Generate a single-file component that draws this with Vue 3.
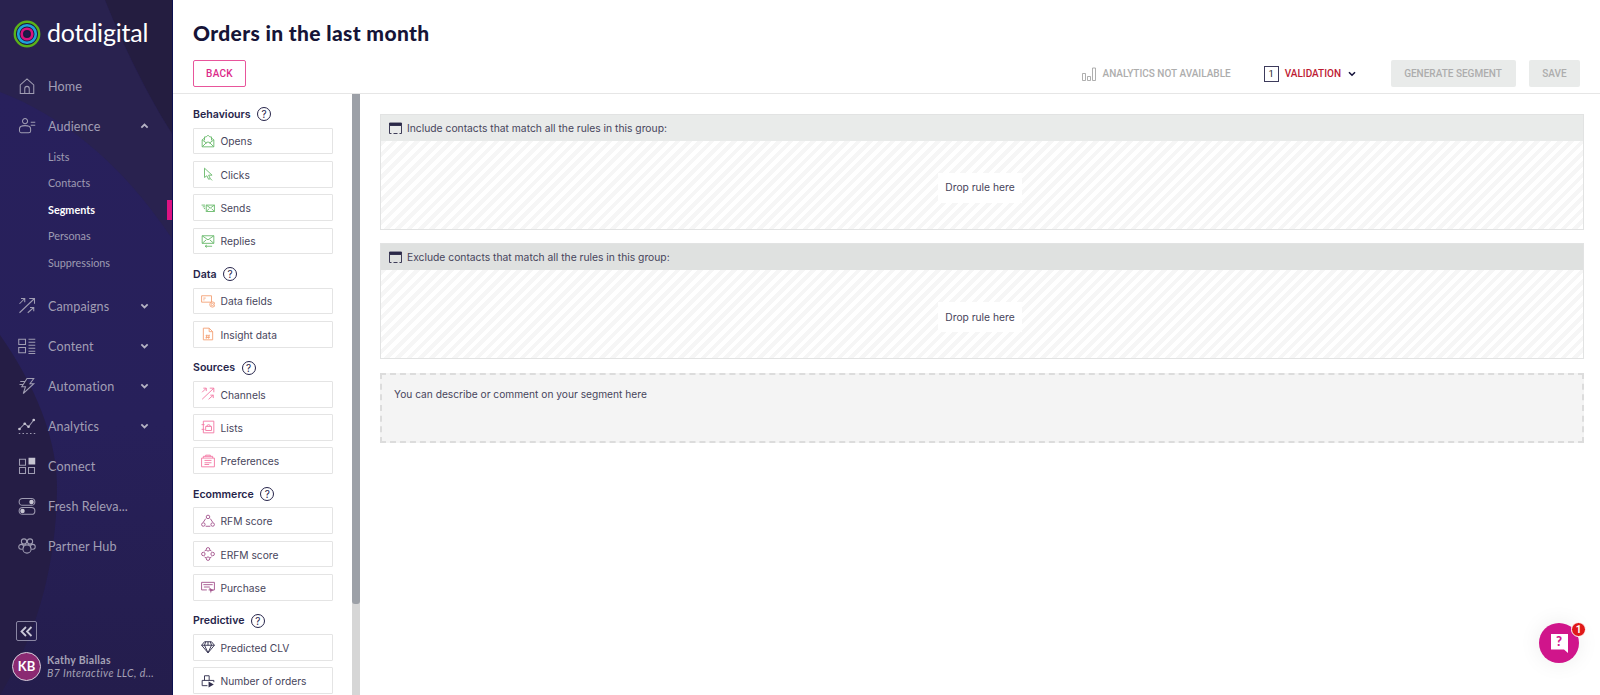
<script setup>
const nav = [
  { label: 'Home', icon: ['M3 22V10.5L12 2.5l9 8V22zM9 22v-6.5a3 3 0 0 1 6 0V22'] },
  { label: 'Audience', chev: 'up', icon: ['M6 5.5a3.4 3.4 0 1 1 6.8 0a3.4 3.4 0 1 1-6.8 0zM4 21a2.500 2.500 0 0 1-2-2.500v-3C2 13 4.500 11.500 9.400 11.500s7.400 1.500 7.400 4v3c0 1.500-1 2.500-2.500 2.500zM17 7h6M17 11h6'] },
]
const navB = [
  { label: 'Campaigns', chev: 'down', icon: ['M2 21L22 2M15 2h7v7M2 9l7-7M4 2h5v5M13 21l8-7M16 14h5v5'] },
  { label: 'Content', chev: 'down', icon: ['M1 3h9v7H1zM1 14h9v7H1zM14 3h9M14 7h9M14 11h9M14 15h9M14 19h9M14 22h9'] },
  { label: 'Automation', chev: 'down', icon: ['M12 2h9l-5 7h5L7 22l3-9H5zM3 6h6M2 10h5'] },
  { label: 'Analytics', chev: 'down', icon: ['M2 16l7-7 5 4 7-9M1 22h2M6 22h2M11 22h2M16 22h2M21 22h2'], dots: [[2, 16], [9, 9], [14, 13], [21, 4]] },
  { label: 'Connect', icon: ['M2 3h8v8H2zM2 14h8v8H2zM14 14h8v8h-8z'], fill: ['M14 1h9v9h-9z'] },
  { label: 'Fresh Releva...', icon: ['M6 2h12a4 4 0 0 1 0 9H6a4 4 0 0 1 0-9zM6 14h12a4 4 0 0 1 0 9H6a4 4 0 0 1 0-9z'], fill: ['M15 6.500a3 3 0 1 0 6 0a3 3 0 1 0-6 0zM3 18.500a3 3 0 1 0 6 0a3 3 0 1 0-6 0z'] },
  { label: 'Partner Hub', icon: ['M4.500 6a3.500 3.500 0 1 0 7 0a3.500 3.500 0 1 0-7 0zM12.500 6a3.500 3.500 0 1 0 7 0a3.500 3.500 0 1 0-7 0zM1 13a3.200 3.200 0 1 0 6.400 0a3.200 3.200 0 1 0-6.400 0zM16.600 13a3.200 3.200 0 1 0 6.400 0a3.200 3.200 0 1 0-6.400 0zM6.500 16a5.500 5.500 0 1 0 11 0a5.500 5.500 0 1 0-11 0z'] },
]
const subs = ['Lists', 'Contacts', 'Segments', 'Personas', 'Suppressions']

const groups = [
  { title: 'Behaviours', items: [
    { label: 'Opens', cls: 'green', d: 'M2 10l4-3M22 10l-4-3M6 11V5h3l3-3 3 3h3v6M2 10v12h20V10M2 22l8-8h4l8 8M2 10l8 6M22 10l-8 6' },
    { label: 'Clicks', cls: 'green', d: 'M6 2v16l4-3 3 6 3-1-3-6h6zM16 20l3 3' },
    { label: 'Sends', cls: 'green', d: 'M9 7h14v11H9zM9 7l7 5 7-5M9 18l5-5M23 18l-5-5M1 7h6M3 10h4M5 13h2' },
    { label: 'Replies', cls: 'green', d: 'M2 3h20v13H2zM2 3l10 7 10-7M2 16l7-6M22 16l-7-6M7 21h12M7 21l3-2M7 21l3 2' },
  ] },
  { title: 'Data', items: [
    { label: 'Data fields', cls: 'orange', d: 'M1 3h17v11H1zM4 7h4M4 10h2M15 18a4.500 4.500 0 1 0 9 0a4.500 4.500 0 1 0-9 0zM17.500 18a2 2 0 1 0 4 0a2 2 0 1 0-4 0' },
    { label: 'Insight data', cls: 'orange', d: 'M4 2h10l6 6v14H4zM14 2v6h6M10 13l-1 7M14 13l-1 7M8 15h7M8 18h7' },
  ] },
  { title: 'Sources', items: [
    { label: 'Channels', cls: 'pink', d: 'M2 21L22 2M15 2h7v7M2 9l7-7M4 2h5v5M13 21l8-7M16 14h5v5' },
    { label: 'Lists', cls: 'pink', d: 'M4 2h18v20H4zM1 8h5M1 16h5M8 11h10v7H8zM10 11a3 3 0 0 1 6 0' },
    { label: 'Preferences', cls: 'pink', d: 'M1 7h22v15H1zM4 7V4h16v3M8 4V2h8v2M6 11h12M6 15h12M6 18h8' },
  ] },
  { title: 'Ecommerce', items: [
    { label: 'RFM score', cls: 'purple', d: 'M9 5a3 3 0 1 0 6 0a3 3 0 1 0-6 0zM1 18a3 3 0 1 0 6 0a3 3 0 1 0-6 0zM17 18a3 3 0 1 0 6 0a3 3 0 1 0-6 0zM8 21h8M4 14l4-6M20 14l-4-6' },
    { label: 'ERFM score', cls: 'purple', d: 'M9 4a3 3 0 1 0 6 0a3 3 0 1 0-6 0zM9 20a3 3 0 1 0 6 0a3 3 0 1 0-6 0zM1 12a3 3 0 1 0 6 0a3 3 0 1 0-6 0zM17 12a3 3 0 1 0 6 0a3 3 0 1 0-6 0zM6 7l3-2M18 7l-3-2M6 17l3 2M18 17l-3 2' },
    { label: 'Purchase', cls: 'purple', d: 'M1 4h22v13H13M1 4v13h9M4 8h16M5 12h10', f: 'M14 13l8 5-4 1-1 4z' },
  ] },
  { title: 'Predictive', items: [
    { label: 'Predicted CLV', cls: 'dark', d: 'M6 3h12l5 6-11 13L1 9zM1 9h22M8 3L6 9l6 13 6-13-2-6M12 3v6' },
    { label: 'Number of orders', cls: 'dark', d: 'M2 11h20M2 11v9h9M22 11v3M6 11V3h8v8', f: 'M13 13l9 5-9 5z' },
  ] },
]

const boxes = [
  { text: 'Include contacts that match all the rules in this group:', cls: '' },
  { text: 'Exclude contacts that match all the rules in this group:', cls: 'darker' },
]
</script>

<template>
  <div class="app">
    <aside class="side">
      <svg class="side-bg" width="173" height="695" viewBox="0 0 173 695" aria-hidden="true">
        <defs>
          <linearGradient id="sideFill" x1="0" y1="92" x2="0" y2="695" gradientUnits="userSpaceOnUse">
            <stop offset="0" stop-color="#28205c" />
            <stop offset=".55" stop-color="#27205a" />
            <stop offset="1" stop-color="#241d4c" />
          </linearGradient>
        </defs>
        <path d="M0 0H173V695H0Z" fill="url(#sideFill)" />
        <path d="M0 0H105C125 50 150 100 173 135V240C120 160 60 115 0 92Z" fill="#29224f" />
        <path d="M105 0H173V135C150 100 125 50 105 0Z" fill="#241d40" />
        <path d="M0 335C35 385 58 440 57 490C56 560 40 630 0 695Z" fill="#251d45" />
      </svg>

      <div class="logo">
        <svg width="28" height="28" viewBox="0 0 28 28" aria-hidden="true">
          <circle cx="14" cy="14" r="12.200" fill="#1a1a40" stroke="#5bb318" stroke-width="2.400" />
          <circle cx="14" cy="14" r="8.800" fill="none" stroke="#1ea2d8" stroke-width="2.600" />
          <circle cx="14" cy="14" r="5.300" fill="none" stroke="#d8127e" stroke-width="2.600" />
          <circle cx="14" cy="14" r="2.400" fill="#1e1a4c" />
        </svg>
        <span class="logo-text">dotdigital</span>
      </div>

      <nav class="nav">
        <div v-for="n in nav" :key="n.label" class="nav-item">
          <svg class="nav-icon" viewBox="0 0 24 24" aria-hidden="true"><path v-for="d in n.icon" :key="d" :d="d" /></svg>
          <span class="nav-label">{{ n.label }}</span>
          <svg v-if="n.chev" class="chev" :class="{ up: n.chev === 'up' }" viewBox="0 0 10 6" aria-hidden="true"><path d="M1.500 1.200L5 4.600l3.500-3.400" /></svg>
        </div>
        <div class="subs">
          <div v-for="s in subs" :key="s" class="sub" :class="{ active: s === 'Segments' }">
            {{ s }}
            <span v-if="s === 'Segments'" class="marker"></span>
          </div>
        </div>
        <div v-for="n in navB" :key="n.label" class="nav-item">
          <svg class="nav-icon" viewBox="0 0 24 24" aria-hidden="true">
            <path v-for="d in n.icon" :key="d" :d="d" />
            <path v-for="d in n.fill || []" :key="d" :d="d" class="solid" />
            <circle v-for="p in n.dots || []" :key="p[0]" :cx="p[0]" :cy="p[1]" r="1.800" class="solid" />
          </svg>
          <span class="nav-label">{{ n.label }}</span>
          <svg v-if="n.chev" class="chev" viewBox="0 0 10 6" aria-hidden="true"><path d="M1.500 1.200L5 4.600l3.500-3.400" /></svg>
        </div>
      </nav>

      <div class="side-foot">
        <button class="collapse" aria-label="Collapse">
          <svg width="13" height="11" viewBox="0 0 13 11" aria-hidden="true"><path d="M6 1L1.500 5.500 6 10M11.500 1L7 5.500l4.500 4.500" /></svg>
        </button>
        <div class="user">
          <div class="avatar">KB</div>
          <div class="user-text">
            <div class="user-name">Kathy Biallas</div>
            <div class="user-org">B7 Interactive LLC, d...</div>
          </div>
        </div>
      </div>
    </aside>

    <main class="main">
      <header class="head">
        <h1 class="title">Orders in the last month</h1>
        <div class="bar">
          <button class="back">BACK</button>
          <div class="tools">
            <div class="analytics">
              <svg width="14" height="14" viewBox="0 0 14 14" aria-hidden="true"><path d="M.500 6.500h3v7h-3zM5.500 9.500h3v4h-3zM10.500 1h3v12.500h-3z" /></svg>
              <span>ANALYTICS NOT AVAILABLE</span>
            </div>
            <div class="validation">
              <span class="count">1</span>
              <span class="val-text">VALIDATION</span>
              <svg width="8" height="6" viewBox="0 0 8 6" aria-hidden="true"><path d="M1 1.200l3 3 3-3" /></svg>
            </div>
            <button class="disabled gen">GENERATE SEGMENT</button>
            <button class="disabled save">SAVE</button>
          </div>
        </div>
      </header>

      <div class="body">
        <div class="palette">
          <section v-for="g in groups" :key="g.title" class="group">
            <div class="g-title">{{ g.title }}<span class="help">?</span></div>
            <div v-for="it in g.items" :key="it.label" class="item">
              <svg class="item-icon" :class="it.cls" viewBox="0 0 24 24" aria-hidden="true">
                <path :d="it.d" />
                <path v-if="it.f" :d="it.f" class="solid" />
              </svg>
              <span class="item-text">{{ it.label }}</span>
            </div>
          </section>
        </div>
        <div class="scroll"><div class="thumb"></div></div>

        <div class="content">
          <div v-for="b in boxes" :key="b.text" class="box" :class="b.cls">
            <div class="box-head">
              <svg width="13" height="12" viewBox="0 0 13 12" aria-hidden="true">
                <path d="M.500 1h12v2.500H.500z" class="box-top" />
                <path d="M.500 3.500v8M12.500 3.500v8M.500 11.500h2M4.500 11.500h4M10.500 11.500h2" />
              </svg>
              <span>{{ b.text }}</span>
            </div>
            <div class="zone"><span class="drop">Drop rule here</span></div>
          </div>
          <div class="note">You can describe or comment on your segment here</div>
        </div>
      </div>
    </main>

    <div class="chat">
      <svg width="17" height="19" viewBox="0 0 17 19" aria-hidden="true"><path d="M0 0h17v19l-4-3.500H0z" fill="#fff" /></svg>
      <span class="chat-q">?</span>
      <span class="badge">1</span>
    </div>
  </div>
</template>

<style>
html, body { margin: 0; padding: 0; background: #fff; overflow: hidden; }
</style>

<style scoped>
.app {
  position: relative;
  display: flex;
  width: 1600px;
  height: 695px;
  overflow: hidden;
  font-family: Roboto, "Liberation Sans", sans-serif;
  color: #3d3b52;
}
.side {
  position: relative;
  flex: 0 0 173px;
  box-sizing: border-box;
  width: 173px;
  height: 695px;
  border-right: 1px solid #0e1150;
  display: flex;
  flex-direction: column;
  font-family: Lato, "Liberation Sans", sans-serif;
  overflow: hidden;
}
.side-bg { position: absolute; left: 0; top: 0; }
.logo, .nav, .side-foot { position: relative; }
.logo {
  display: flex;
  align-items: center;
  gap: 6px;
  height: 28px;
  padding: 20px 0 0 13px;
}
.logo-text { margin-top: -4px; color: #fff; font-size: 25px; line-height: 28px; letter-spacing: -.2px; }
.nav { margin-top: 18px; }
.nav-item {
  display: flex;
  align-items: center;
  height: 40px;
  padding-left: 18px;
  color: #a19eb4;
}
.nav-icon {
  flex: 0 0 18px;
  width: 18px;
  height: 18px;
  fill: none;
  stroke: #9f9cb2;
  stroke-width: 1.400;
}
.nav-icon .solid { fill: #c7c5d2; stroke: none; }
.nav-label { margin-left: 12px; font-size: 12.600px; letter-spacing: .1px; white-space: nowrap; }
.chev {
  position: absolute;
  left: 140px;
  width: 9px;
  height: 6px;
  fill: none;
  stroke: #b5b3c4;
  stroke-width: 2;
}
.chev.up { transform: rotate(180deg); }
.subs { margin-top: -2.500px; padding-bottom: 9.500px; }
.sub {
  position: relative;
  height: 26.670px;
  line-height: 26.670px;
  padding-left: 48px;
  font-size: 10.800px;
  color: #9e9bb2;
}
.sub.active { color: #fff; font-weight: 700; }
.marker {
  position: absolute;
  right: 0;
  top: 3px;
  width: 5px;
  height: 20px;
  background: #dd1282;
}
.side-foot { margin-top: auto; padding: 0 0 14px 12px; }
.collapse {
  display: flex;
  align-items: center;
  justify-content: center;
  box-sizing: border-box;
  width: 21px;
  height: 20px;
  margin-left: 4px;
  padding: 0;
  background: transparent;
  border: 1.500px solid #8a86a3;
  border-radius: 2px;
}
.collapse svg { fill: none; stroke: #c9c7d6; stroke-width: 1.800; }
.user { display: flex; align-items: center; gap: 6px; margin-top: 11px; }
.avatar {
  box-sizing: border-box;
  flex: 0 0 29px;
  width: 29px;
  height: 29px;
  border-radius: 50%;
  background: #8b2a72;
  border: 1.500px solid #d6d2de;
  color: #fff;
  font-size: 13px;
  font-weight: 700;
  line-height: 26px;
  text-align: center;
}
.user-text { font-size: 10.500px; line-height: 13px; color: #a5a2b6; white-space: nowrap; letter-spacing: .3px; }
.user-name { font-weight: 700; }
.user-org { font-style: italic; letter-spacing: .4px; }

.main { flex: 1; display: flex; flex-direction: column; min-width: 0; }
.head {
  box-sizing: border-box;
  height: 94px;
  border-bottom: 1px solid #e6e6e6;
  padding: 20px 0 0 20px;
}
.title {
  margin: 0;
  height: 26px;
  font-family: Lato, "Liberation Sans", sans-serif;
  font-size: 21px;
  line-height: 26px;
  font-weight: 900;
  color: #161437;
  letter-spacing: .35px;
}
.bar { display: flex; align-items: center; justify-content: space-between; margin-top: 14px; padding-right: 20px; }
button { font-family: inherit; cursor: default; }
.back {
  box-sizing: border-box;
  width: 53px;
  height: 27px;
  padding: 0;
  background: #fff;
  border: 1px solid #e8559b;
  border-radius: 2px;
  color: #dc2a8a;
  font-size: 10px;
  font-weight: 500;
  letter-spacing: .3px;
}
.tools { display: flex; align-items: center; }
.analytics {
  display: flex;
  align-items: center;
  gap: 7px;
  color: #adadad;
  font-size: 10px;
  font-weight: 500;
}
.analytics svg { fill: none; stroke: #9a9a9a; stroke-width: .8; }
.validation { display: flex; align-items: center; margin-left: 33px; }
.count {
  box-sizing: border-box;
  width: 15px;
  height: 16px;
  border: 1px solid #3d3b5c;
  font-size: 9.500px;
  line-height: 14px;
  text-align: center;
  color: #222;
}
.val-text { margin-left: 6px; color: #bd1a33; font-size: 10px; font-weight: 500; }
.validation svg { margin-left: 7px; fill: none; stroke: #15133a; stroke-width: 1.600; }
.disabled {
  height: 27px;
  padding: 0;
  background: #e9ebea;
  border: 0;
  border-radius: 2px;
  color: #adadad;
  font-size: 10px;
  font-weight: 500;
}
.gen { width: 125px; margin-left: 34.500px; }
.save { width: 51px; margin-left: 13.500px; }

.body { flex: 1; display: flex; min-height: 0; }
.palette {
  box-sizing: border-box;
  flex: 0 0 179px;
  width: 179px;
  padding: 7px 19px 0 20px;
  overflow: hidden;
}
.group { margin-bottom: 6.670px; }
.g-title {
  display: flex;
  align-items: center;
  height: 26.670px;
  font-family: Inter, Roboto, sans-serif;
  font-size: 10.600px;
  font-weight: 600;
  color: #26244a;
}
.help {
  box-sizing: border-box;
  width: 14px;
  height: 14px;
  margin-left: 6.500px;
  border: 1px solid #26244a;
  border-radius: 50%;
  font-size: 10px;
  line-height: 12px;
  text-align: center;
  font-weight: 400;
}
.item {
  box-sizing: border-box;
  display: flex;
  align-items: center;
  height: 26.670px;
  margin-bottom: 6.670px;
  padding-left: 7px;
  border: 1px solid #e4e4e4;
  border-radius: 1px;
  font-family: Inter, Roboto, sans-serif;
  font-size: 10.250px;
  color: #47455c;
}
.item:last-child { margin-bottom: 0; }
.item-text { padding-top: 1px; }
.item-icon {
  flex: 0 0 14px;
  width: 14px;
  height: 14px;
  margin-right: 5.500px;
  fill: none;
  stroke-width: 1.600;
}
.item-icon.green { stroke: #6dbb6f; }
.item-icon.orange { stroke: #f4a47a; }
.item-icon.pink { stroke: #f37ba6; }
.item-icon.purple { stroke: #a5568f; }
.item-icon.dark { stroke: #322f4d; }
.item-icon .solid { stroke: none; }
.item-icon.purple .solid { fill: #a5568f; }
.item-icon.dark .solid { fill: #322f4d; }
.scroll { flex: 0 0 8px; width: 8px; background: #d6d6d6; }
.thumb { height: 510px; background: #9ca0a7; border-radius: 0 0 3px 3px; }

.content { flex: 1; min-width: 0; padding: 20px 16px 0 20px; }
.box {
  box-sizing: border-box;
  height: 115.500px;
  margin-bottom: 13.800px;
  border: 1px solid #e2e3e3;
  display: flex;
  flex-direction: column;
}
.box-head {
  display: flex;
  align-items: center;
  gap: 5px;
  flex: 0 0 26px;
  padding-left: 8px;
  background: #e9ebea;
  font-family: Inter, Roboto, sans-serif;
  font-size: 10.300px;
  color: #47455c;
}
.box.darker .box-head { background: #dfe1e0; }
.box-head svg { fill: none; stroke: #2b2948; stroke-width: .9; }
.box-head .box-top { fill: #2b2948; stroke: #2b2948; }
.zone {
  flex: 1;
  display: flex;
  align-items: center;
  justify-content: center;
  background: repeating-linear-gradient(135deg, #f6f6f6 0 4px, #fff 4px 8px);
}
.drop {
  margin: 6px 4px 0 0;
  padding: 7.500px 7px;
  background: #fff;
  font-family: Inter, Roboto, sans-serif;
  font-size: 10.250px;
  line-height: 15px;
  color: #47455c;
}
.note {
  box-sizing: border-box;
  height: 70px;
  padding: 12px 12px;
  border: 2px dashed #dcdcdc;
  background: #f4f4f4;
  font-family: Inter, Roboto, sans-serif;
  font-size: 10.200px;
  line-height: 15px;
  color: #47455c;
}

.chat {
  position: absolute;
  left: 1539px;
  top: 623px;
  width: 40px;
  height: 40px;
  border-radius: 50%;
  background: #d0158b;
  box-shadow: 0 0 22px rgba(0, 0, 0, .08);
  display: flex;
  align-items: center;
  justify-content: center;
}
.chat-q {
  position: absolute;
  left: 0;
  right: 0;
  top: 10px;
  text-align: center;
  font: 900 13px/16px Lato, sans-serif;
  color: #d0158b;
}
.badge {
  position: absolute;
  left: 32px;
  top: -1px;
  box-sizing: border-box;
  width: 15px;
  height: 15px;
  border-radius: 50%;
  border: 1px solid #fff;
  background: #e01818;
  color: #fff;
  font-size: 10px;
  font-weight: 700;
  line-height: 13px;
  text-align: center;
}
</style>
